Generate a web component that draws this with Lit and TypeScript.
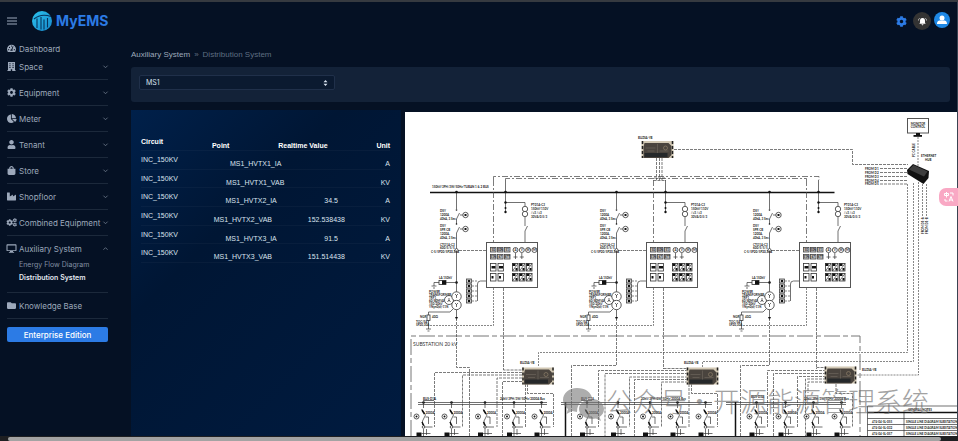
import { LitElement, html, svg, css } from "lit";
import { customElement, state } from "lit/decorators.js";

const COG =
  "M487.4 315.7l-42.6-24.6c4.3-23.2 4.3-47 0-70.2l42.6-24.6c4.9-2.8 7.1-8.6 5.5-14-11.1-35.6-30-67.8-54.7-94.6-3.8-4.1-10-5.1-14.8-2.3L380.8 110c-17.9-15.4-38.5-27.3-60.8-35.1V25.8c0-5.6-3.9-10.5-9.4-11.7-36.7-8.2-74.3-7.8-109.2 0-5.5 1.2-9.4 6.1-9.4 11.7V75c-22.2 7.9-42.8 19.8-60.8 35.1L88.7 85.5c-4.9-2.8-11-1.9-14.8 2.3-24.7 26.7-43.6 58.9-54.7 94.6-1.7 5.4.6 11.2 5.5 14L67.3 221c-4.3 23.2-4.3 47 0 70.2l-42.6 24.6c-4.9 2.8-7.1 8.6-5.5 14 11.1 35.6 30 67.8 54.7 94.6 3.8 4.1 10 5.1 14.8 2.3l42.6-24.6c17.9 15.4 38.5 27.3 60.8 35.1v49.2c0 5.6 3.9 10.5 9.4 11.7 36.7 8.2 74.3 7.8 109.2 0 5.5-1.2 9.4-6.1 9.4-11.7v-49.2c22.2-7.9 42.8-19.8 60.8-35.1l42.6 24.6c4.9 2.8 11 1.9 14.8-2.3 24.7-26.7 43.6-58.9 54.7-94.6 1.5-5.5-.7-11.3-5.6-14.1zM256 336c-44.1 0-80-35.9-80-80s35.9-80 80-80 80 35.9 80 80-35.9 80-80 80z";

const ICONS: Record<string, unknown> = {
  gauge: svg`<path fill-rule="evenodd" d="M256 40C115 40 0 150 0 290c0 53 14 102 40 145 6 9 15 13 26 13h380c11 0 20-4 26-13 26-43 40-92 40-145C512 150 397 40 256 40zM256 84a32 32 0 1 1 0 64 32 32 0 0 1 0-64zM96 352a32 32 0 1 1 0-64 32 32 0 0 1 0 64zm48-128a32 32 0 1 1 0-64 32 32 0 0 1 0 64zm222-76-62 165c17 14 24 35 16 71H192c-10-50 16-88 64-90l66-160c8-16 50-8 44 14zm50 204a32 32 0 1 1 0-64 32 32 0 0 1 0 64z"/>`,
  building: svg`<path fill-rule="evenodd" d="M56 0h400v464h40v48H296v-96h-80v96H16v-48h40zM136 72v56h64V72zM312 72v56h64V72zM136 180v56h64v-56zM312 180v56h64v-56zM136 288v56h64v-56zM312 288v56h64v-56z"/>`,
  cog: svg`<path d=${COG} />`,
  pie: svg`<path d="M527.8 288H290.5l158 158c6 6 16 6.500 22.200.7 38.700-36.500 65.300-85.600 73.100-140.900 1.300-9.400-6.500-17.800-16-17.800zM512 223.200C503.700 103.700 408.300 8.300 288.800 0 279.700-.6 272 7.100 272 16.200V240h223.800c9.100 0 16.800-7.700 16.200-16.800zM224 288V50.700c0-9.500-8.400-17.400-17.800-16C87 51.500-4.100 155.600.1 280.400 4.500 408.500 114.800 513.600 243 512c50.400-.6 97-16.900 135.300-44 7.900-5.600 8.400-17.200 1.600-24.100z"/>`,
  user: svg`<path transform="translate(32 0)" d="M224 256c70.7 0 128-57.3 128-128S294.700 0 224 0 96 57.300 96 128s57.300 128 128 128zm89.600 32h-16.700c-22.200 10.200-46.900 16-72.900 16s-50.600-5.800-72.900-16h-16.700C60.200 288 0 348.200 0 422.400V464c0 26.500 21.500 48 48 48h352c26.500 0 48-21.500 48-48v-41.600c0-74.200-60.200-134.400-134.400-134.400z"/>`,
  bag: svg`<path transform="translate(32 0)" fill-rule="evenodd" d="M352 160v-32C352 57.400 294.600 0 224 0S96 57.400 96 128v32H0v272c0 44.200 35.800 80 80 80h288c44.200 0 80-35.800 80-80V160zm-192-32c0-35.300 28.700-64 64-64s64 28.700 64 64v32H160z"/>`,
  factory: svg`<path d="M475.100 163.800L336 252.300V184c0-18.900-20.900-30.400-36.900-20.200L160 252.300V56c0-13.300-10.700-24-24-24H24C10.700 32 0 42.700 0 56v400c0 13.300 10.700 24 24 24h464c13.300 0 24-10.700 24-24V184c0-18.900-20.900-30.400-36.900-20.200z"/>`,
  cogs: svg`<g><path transform="translate(-40 60) scale(.76)" d=${COG}/><path transform="translate(330 10) scale(.46)" d=${COG}/><path transform="translate(330 260) scale(.46)" d=${COG}/></g>`,
  desktop: svg`<path fill-rule="evenodd" d="M30 20h452c36 0 60 24 60 60v270c0 30-24 54-60 54H340l14 50h50v48H108v-48h50l14-50H30c-36 0-60-24-60-54V80c0-36 24-60 60-60zM30 80v270h452V80z"/>`,
  folder: svg`<path d="M464 128H272l-64-64H48C21.500 64 0 85.500 0 112v288c0 26.500 21.500 48 48 48h416c26.500 0 48-21.500 48-48V176c0-26.500-21.500-48-48-48z"/>`,
};

const NAV: [string, string][] = [
  ["building", "Space"],
  ["cog", "Equipment"],
  ["pie", "Meter"],
  ["user", "Tenant"],
  ["bag", "Store"],
  ["factory", "Shopfloor"],
  ["cogs", "Combined Equipment"],
];

const POINTS = [
  { circuit: "INC_150KV", point: "MS1_HVTX1_IA", value: "", unit: "A" },
  { circuit: "INC_150KV", point: "MS1_HVTX1_VAB", value: "", unit: "KV" },
  { circuit: "INC_150KV", point: "MS1_HVTX2_IA", value: "34.5", unit: "A" },
  { circuit: "INC_150KV", point: "MS1_HVTX2_VAB", value: "152.538438", unit: "KV" },
  { circuit: "INC_150KV", point: "MS1_HVTX3_IA", value: "91.5", unit: "A" },
  { circuit: "INC_150KV", point: "MS1_HVTX3_VAB", value: "151.514438", unit: "KV" },
];

@customElement("line-diagram")
export class LineDiagram extends LitElement {
  static styles = css`
    :host { display: block; background: #fff; }
    svg { display: block; width: 100%; height: auto; }
    .wire { fill: none; stroke: #333; stroke-width: 0.7; }
    .dash { fill: none; stroke: #444; stroke-width: 0.7; stroke-dasharray: 3 1; }
    .fine { fill: none; stroke: #555; stroke-width: 0.7; stroke-dasharray: 2 1; }
    .chain { fill: none; stroke: #444; stroke-width: 0.7; stroke-dasharray: 6 2 2 2; }
    .edge { fill: none; stroke: #777; stroke-width: 1; stroke-dasharray: 16 3 5 3; }
    .bus { fill: none; stroke: #111; stroke-width: 1.5; }
    .ring { fill: #fff; stroke: #333; stroke-width: 0.8; }
    .tag { fill: #ccc; stroke: #444; stroke-width: 0.8; }
    .panel { fill: #fff; stroke: #555; stroke-width: 1; }
    .ink { fill: #111; }
    text { font-family: Lato, "Liberation Sans", sans-serif; fill: #222; }
    .t3 { font-size: 3px; font-weight: 700; }
    .t5 { font-size: 5px; fill: #333; }
    .mark { opacity: 0.6; }
    .mark text { font-family: "Noto Sans CJK SC", sans-serif; font-size: 27px; font-weight: 300; fill: #666; }
    .mark path { fill: #777; }
  `;

  private lines(x: number, y: number, rows: string[], step = 3) {
    return rows.map((r, i) => svg`<text class="t3" x=${x} y=${y + i * step}>${r}</text>`);
  }

  private device(x: number, y: number, label: string, lx: number, ly: number) {
    return svg`
      <g transform="translate(${x} ${y})">
        <rect width="32" height="17" fill="#d2c8b4" />
        <path d="M1 0V17M31 0V17" stroke="#222" stroke-width="1.500" stroke-dasharray="3 2" />
        <path d="M3 2H27L30 5V14L27 17H2V6Z" fill="#4a443e" />
        <path d="M3 12H26V16H3Z" fill="#25282a" />
        <path d="M16 3V12M4 7H14M18 10H27M6 10H13" stroke="#6b645c" stroke-width=".7" />
        <circle cx="24" cy="7" r="2" fill="none" stroke="#8b7d69" stroke-width=".7" />
      </g>
      <text class="t3" x=${lx} y=${ly}>${label}</text>`;
  }

  private breaker(y: number) {
    return svg`
      <path class="wire" d="M456.500 ${y + 6}L459.500 ${y}M460 ${y + 2}h3" />
      <circle class="ring" cx="465.500" cy=${y + 2} r="2.700" />
      <rect class="ink" x="464.500" y=${y + 1} width="2" height="2" />`;
  }

  private bay(dx: number) {
    return svg`
      <g transform="translate(${dx} 0)">
        <path class="wire" d="M456.500 192V209M456.500 219V224M456.500 233V318" />
        <circle class="ink" cx="456.500" cy="192" r="1.300" />
        <circle class="ink" cx="456.500" cy="282.500" r="1.300" />
        <circle class="ink" cx="456.500" cy="210" r=".8" /><circle class="ink" cx="456.500" cy="224" r=".8" />
        ${this.breaker(213)} ${this.breaker(227)}
        ${this.lines(440, 212, ["DSY", "1200A", "40kA, 3 Sec."], 4)}
        ${this.lines(440, 227, ["DSY", "SPR CB", "1200A,", "40kA, 3 Sec."], 4)}
        ${this.lines(440, 246, ["CTO1A-C3", "600/5/5/5"], 3)}
        <text class="t3" x="431" y="253">C-5/5P20/5P20,30A</text>
        <path class="ring" d="M456.500 248l2.500 3h-5z" />
        <path class="dash" d="M459 250.500H486" />
        <path class="wire" d="M456.500 282.500H434V286M431.500 286h5M433 288h2" />
        <rect class="ring" x="439" y="280.500" width="7" height="4" /><rect class="ink" x="442" y="280.500" width="4" height="4" />
        <text class="t3" x="439" y="279">LA 150kV</text>
        ${this.lines(429, 293, ["POWER", "TRANSFORMER", "TRF1", "60/80MVA", "150/20kV", "YNyn0(d)-11%"])}
        <circle class="ring" cx="449" cy="300" r="4.500" />
        <circle class="ring" cx="456.500" cy="296.500" r="4.700" /><circle class="ring" cx="456.500" cy="305" r="4.700" />
        <path class="wire" d="M449 298v3M447.500 302l1.500-2 1.500 2M456.500 295v3M455 294l1.500 1.500 1.500-1.500M456.500 304v3M455 303l1.500 1.500 1.500-1.500" />
        <path class="wire" d="M453 309L450 312H428.500V315M428.500 320V329M426 329h5M427.500 331h2" />
        <rect class="ring" x="427" y="315" width="3" height="5.500" />
        <text class="t3" x="420" y="318">NGR</text><text class="t3" x="432" y="318">40Ω</text>
        ${this.lines(416, 323, ["TOC/5A", "5P20,30A"], 3)}
        <path class="ink" d="M455 317h3l-1.500 3z" />
        <path class="fine" d="M430 325.500H493.500V288" />
        <path class="chain" d="M493.500 180V242" />
        <path class="dash" d="M503.500 288V369" />
        <path class="wire" d="M505.500 180V212M505.500 202.500H525V206M525 217V226M525 231l2.500-5M525 231V242" />
        <circle class="ink" cx="505.500" cy="192" r="1.300" /><circle class="ink" cx="505.500" cy="202.500" r="1.200" />
        <circle class="ink" cx="505.500" cy="208" r="1" /><circle class="ink" cx="505.500" cy="212" r="1.200" />
        <circle class="ring" cx="525" cy="209" r="2.700" /><circle class="ring" cx="525" cy="214" r="2.700" />
        ${this.lines(531, 206, ["PT01A-C3", "150kV/110V", "/√3  /√3", "30VA/0.5/3"], 4)}
        <rect class="panel" x="486.500" y="242.500" width="51" height="45" />
        ${["50", "50N", "51", "51N", "67", "87T"].map(
          (t, i) => svg`
            <rect class="tag" x=${490.5 + (i % 3) * 7} y=${247.5 + Math.floor(i / 3) * 7} width="5.500" height="4.500" />
            <text class="t3" text-anchor="middle" x=${493.3 + (i % 3) * 7} y=${251 + Math.floor(i / 3) * 7}>${t}</text>`,
        )}
        ${[0, 1, 2, 3].map(
          (i) => svg`<circle class="ring" cx=${515.5 + i * 6.3} cy="250" r="2.500" />
            <text class="t3" text-anchor="middle" x=${515.5 + i * 6.3} y="251">${"AVWM"[i]}</text>`,
        )}
        <path class="wire" d="M515.500 253v6M513.500 257h4M521.800 253v6M519.800 257h4" />
        ${[0, 1, 2, 3].map(
          (i) => svg`<rect class="ring" x=${490.5 + (i % 2) * 7.5} y=${263.5 + Math.floor(i / 2) * 10} width="5.500" height="7.500" />
            <rect class="ink" x=${491.5 + (i % 2) * 7.5} y=${266 + Math.floor(i / 2) * 10} width=${i < 2 ? 4 : 2} height="2.500" />`,
        )}
        ${[0, 1, 2, 3, 4, 5].map((i) => {
          const x = 512.5 + (i % 3) * 7;
          const y = 263.5 + Math.floor(i / 3) * 10;
          return svg`<rect class="ring" x=${x} y=${y} width="5.500" height="7.500" />
            <path class="wire" d="M${x} ${y + 7.5}L${x + 5.5} ${y}" />
            <rect class="ink" x=${x} y=${y} width="3" height="2.500" /><rect class="ink" x=${x + 3} y=${y + 4.5} width="2" height="2.500" />`;
        })}
        ${[0, 1, 2, 3, 4].map(
          (i) => svg`<rect class="tag" x="466.500" y=${279 + i * 5} width="5" height="4" />
            <rect class="ink" x="468" y=${280 + i * 5} width="2" height="2" />
            <path class="fine" d="M472 ${281 + i * 5}H477" />`,
        )}
        <path class="wire" d="M477.500 301V284q0-3 3-3H486" />
      </g>`;
  }

  private feeder(x: number) {
    return svg`
      <g transform="translate(${x} 0)">
        <circle class="ink" cy="402.500" r="1.300" />
        <path class="wire" d="M0 402V408M-2 409L2 415L-1 421V425M0 429V436M2 417h3V424M0 427H9" />
        <path class="bus" d="M-1.500 410L1 414M-1.500 422l2 4" />
        <circle class="ring" cx="-7" cy="416.500" r="2.500" /><circle class="ink" cx="-7" cy="416.500" r="1" />
        <circle class="ring" cy="427" r="1.300" />
        <text class="t3" x="2" y="413.500">2000A</text>
        <rect class="ink" x="-7" y="432.500" width="5" height="3.500" />
        <path class="wire" d="M-2 433.500H7M3 429v6" />
      </g>`;
  }

  render() {
    return html`
      <svg viewBox="405 112 552 324" role="img" aria-label="Single line diagram of the distribution system">
        <path class="bus" d="M430 192.500H834.500" />
        <text class="t3" x="432" y="188">150kV/3PH/3W/50Hz/TUBAN 1 &amp; 2 BUS</text>
        <path class="chain" d="M493.500 180V176.500H819V180M505.500 180V178.500H806.500V180" />
        <path class="dash" d="M653.500 180.500H666M656.500 158V180M659.500 158V180M662 158V180M654 178h12" />
        ${[0, 160, 313].map((dx) => this.bay(dx))}

        <path class="dash" d="M674 149.500H852.500V164.500H908" />
        <rect class="panel" x="907.500" y="118.500" width="21" height="14.500" />
        <rect class="ink" x="916" y="133" width="4" height="3" /><rect class="ink" x="913.500" y="135" width="8.500" height="1.800" />
        <text class="t3" text-anchor="middle" x="918" y="125">MONITOR</text><text class="t3" text-anchor="middle" x="918" y="128">CONTROL</text>
        <path class="fine" d="M918 137V166" />
        <text class="t3" transform="translate(915 157) rotate(-90)">PC CABLE</text>
        <text class="t3" x="921" y="156.500">ETHERNET</text><text class="t3" x="925" y="161">HUB</text>
        ${[168.5, 172.5, 176.5, 180.5, 184].map(
          (y, i) => svg`<text class="t3" x="865" y=${y + 1}>FROM D${i + 1}</text><path class="dash" d="M880 ${y}H907" />`,
        )}
        <path class="fine" d="M907.500 184V352.500H538.500V367M913.500 183V361.500H702.500V367M918.500 182V375H857M922.500 184V216M926.500 184V216" />
        <path fill="#111" d="M907 170l6-6 16 7-.5 7-5 6-16-10z" />
        <path fill="#3d3d3d" d="M909 169.500l4.500-4.500 14 6.500-3.500 5z" />
        <text class="t3" transform="translate(923.500 234) rotate(-90)">FROM D1-A</text>
        <text class="t3" transform="translate(928 234) rotate(-90)">FROM D1-B</text>

        <path class="edge" d="M411 436V336H860V436" />
        <text class="t5" x="413" y="346">SUBSTATION 20 kV</text>

        <path class="dash" d="M456.500 318V367.500H469.500V436M616.500 318V365.500H571.500V436M769.500 318V365.500H740.500V436" />
        <path class="dash" d="M503.500 369V370H522M663.500 368.500H688M816.500 367.500H826" />
        <path class="dash" d="M522 372.500H434.500V427M522 375H462.500V427M522 378H497V427M522 381.500H502.500V436M525.500 384V427M527.500 384V393.500H553.500V427" />
        <path class="dash" d="M688 370.500H598.500V427M688 373.500H605V436M688 377H629.500V427M688 379.500H634.500V436M688 382H661.500V427M689 384V427M691.500 384V393.500H717.500V427" />
        <path class="dash" d="M826 370.500H767.500V427M826 373.500H773.500V436M826 376.500H797.500V427M826 379H805.500V436M826 382H808V393M836 384V393.500H852.500V427" />
        <path class="wire" d="M418 402.500H547M418 404.500H547M561 402.500H712M561 404.500H712M726 402.500H846M726 404.500H846" />
        <path class="bus" d="M565.500 402V436M735.500 402V436" />
        ${[423.5, 451.5, 485, 514, 541.5, 587, 618, 650, 677.5, 705.5, 756.5, 785.5, 813.5, 841.5].map((x) => this.feeder(x))}
        <text class="t3" x="423" y="400">BUS-D1A</text><path class="wire" d="M423 400.500h11" />
        <text class="t3" x="581" y="400">BUS-D2A</text><path class="wire" d="M581 400.500h11" />
        <text class="t3" x="751" y="398">BUS-D3A</text>
        <text class="t3" x="500" y="400">20kV/3PH/3W/50Hz/2000A Bus</text>
        <text class="t3" x="641" y="400">20kV/3PH/3W/50Hz/2000A Bus</text>
        <text class="t3" x="804" y="399.500">20kV/3PH/3W/50Hz/2000A Bus</text>

        ${this.device(641.5, 141, "BUZSA-YB", 638, 139)}
        ${this.device(522, 367.5, "BUZSA-YB", 520, 364)}
        ${this.device(686.5, 367.5, "BUZSA-YB", 684, 364)}
        ${this.device(824.5, 366.5, "BUZSA-YB", 862, 371)}

        <path class="wire" d="M867.500 436V406H957M867.500 418.500H957M867.500 424.500H957M867.500 430.500H957M904 412V436" />
        <path class="bus" d="M867.500 412.500H957" />
        <text class="t3" x="908" y="411">GENERAL NOTES</text>
        ${["055", "032", "057"].map(
          (n, i) => svg`<text class="t3" x="872" y=${422.5 + i * 6}>474-04-SL-${n}</text>
            <text class="t3" x="906" y=${422.5 + i * 6}>SINGLE LINE DIAGRAM SUBSTATION</text>`,
        )}

        <g class="mark">
          <path d="M577 388c-8 0-14 5-14 12 0 4 2 7 5 9l-1.500 5 5.500-3 5 1c0-9 6-14 15-14-1-6-7-10-15-10z" />
          <path d="M592 399c-7 0-13 4.500-13 10s6 10 13 10l4-.5 5 2.500-1.500-4c3-2 4.500-5 4.500-8 0-5.500-5-10-12-10z" />
          <text x="606" y="412">公众号</text>
          <text x="686" y="412">·</text>
          <text x="713" y="412">开源能源管理系统</text>
        </g>
      </svg>
    `;
  }
}

@customElement("app-root")
export class AppRoot extends LitElement {
  @state() private auxOpen = true;

  static styles = css`
    :host {
      display: flex;
      flex-direction: column;
      min-height: 100vh;
      box-sizing: border-box;
      border-top: 2px solid #363a40;
      background: #051124;
      color: #9da9bb;
      font: 8px/12px Inter, sans-serif;
      overflow: hidden;
    }
    * { box-sizing: border-box; }
    button { font: inherit; color: inherit; background: none; border: 0; padding: 0; cursor: pointer; }
    a { color: inherit; text-decoration: none; }
    svg { display: block; overflow: visible; }
    .page { flex: 1; display: flex; flex-direction: column; border-right: 1px solid #3a4352; }
    .header { display: flex; align-items: center; height: 38px; padding: 0 7px; }
    .brand { display: flex; align-items: center; gap: 4px; margin-left: 15px; color: #2c7be5; font-size: 14px; line-height: 20px; font-weight: 700; }
    .tools { display: flex; align-items: center; gap: 3px; margin-left: auto; }
    .round { width: 18px; height: 18px; border-radius: 50%; display: grid; place-items: center; }
    .gear { color: #2c7be5; }
    .bell { background: #333; color: #fff; }
    .avatar { background: #1e88e5; color: #fff; width: 16px; height: 16px; margin-bottom: 2px; }
    .columns { flex: 1; display: flex; }
    .side { width: 131px; flex: none; padding: 0 23px 0 7px; }
    .item { display: flex; align-items: center; width: 100%; height: 17px; gap: 3px; font-weight: 400; text-align: left; white-space: nowrap; }
    .item .label { flex: 1; }
    .glyph { width: 9px; height: 9px; fill: currentColor; flex: none; }
    .chev { width: 5px; height: 5px; fill: none; stroke: #6d798b; stroke-width: 1; flex: none; }
    .group { border-bottom: 1px solid #1c293b; padding-bottom: 4px; margin-bottom: 4px; }
    .group.first { padding-top: 1px; }
    .sub { display: flex; flex-direction: column; margin: 0; padding: 1px 0 4px 12px; list-style: none; font-size: 7px; line-height: 13px; color: #8390a3; }
    .sub .on { color: #e3e9f1; font-weight: 600; }
    .promo { display: block; width: 100%; height: 15px; margin-top: 8px; border-radius: 2px; background: #2c7be5; color: #fff; font-weight: 500; }
    .main { flex: 1; min-width: 0; display: flex; flex-direction: column; }
    .crumbs { display: flex; gap: 4px; margin-top: 9px; font: 8px/12px "Liberation Sans", Arial, sans-serif; color: #5f6e82; }
    .crumbs a { color: #9da9bb; }
    .filter { margin: 6px 7px 8px 0; padding: 8px; height: 35px; border-radius: 3px; background: #132238; }
    .pick { position: relative; width: 24%; min-width: 196px; }
    .pick select { appearance: none; display: block; width: 100%; height: 15px; padding: 0 6px; border: 1px solid #20304a; border-radius: 2px; background: #0b1a30; color: #d8e2ef; font: 7px/12px Inter, sans-serif; }
    .pick svg { position: absolute; right: 7px; top: 5px; width: 5px; height: 6px; fill: #d8e2ef; }
    .work { flex: 1; display: flex; gap: 4px; }
    .data { width: 270px; flex: none; padding: 22px 11px 0 10px; background: linear-gradient(135deg, #00204a, #001634 35%, #001b40); }
    line-diagram { flex: 1; min-width: 0; margin-top: 2px; }
    table { display: block; font: 7px/9px "Liberation Sans", Arial, sans-serif; color: #dbe3ee; }
    thead { display: block; height: 19px; }
    tbody { display: grid; grid-template-rows: repeat(6, 1fr); height: 112px; }
    tr { display: flex; justify-content: space-between; height: 100%; border-bottom: 1px solid rgba(255, 255, 255, 0.03); }
    th, td { padding: 8px 0 0; line-height: 9px; }
    thead th { padding-top: 9px; }
    th { color: #fff; font-weight: 700; }
    td:first-child { padding-top: 4px; }
    thead th:first-child { padding-top: 5px; }
    .scroll { display: flex; align-items: center; height: 5px; background: #1e1f22; padding: 0 17px 0 8px; }
    .thumb { flex: 1; height: 4px; border-radius: 2px; background: #a3a3a3; }
    .lang { position: fixed; right: 0; top: 188px; width: 19px; height: 18px; border-radius: 7px 0 0 7px; background: #f9a8c4; color: #fff; display: grid; place-items: center; }
  `;

  private glyph(name: string) {
    return html`<svg class="glyph" viewBox="0 0 512 512" aria-hidden="true">${ICONS[name]}</svg>`;
  }

  private chevron(up = false) {
    return html`<svg class="chev" viewBox="0 0 6 6" aria-hidden="true"><path d=${up ? "M.5 4.500L3 2l2.500 2.500" : "M.5 2L3 4.500 5.500 2"} /></svg>`;
  }

  render() {
    return html`
      <div class="page">
        <header class="header">
          <button aria-label="Toggle menu">
            <svg width="10" height="8" viewBox="0 0 10 8" stroke="#9da9bb" stroke-width="1"><path d="M0 1h10M0 4h10M0 7h10" /></svg>
          </button>
          <a class="brand" href="#">
            <svg width="20" height="20" viewBox="0 0 20 20" aria-hidden="true">
              <defs><linearGradient id="sea" x1="0" y1="0" x2="1" y2="1"><stop offset="0" stop-color="#2cc4ee" /><stop offset="1" stop-color="#1787cb" /></linearGradient></defs>
              <circle cx="10" cy="10" r="10" fill="url(#sea)" />
              <path d="M2 8Q9 2 19 5.500M5 7.500V17M9 6V18.500M12 8.500V18.500M15.500 7V16.500" fill="none" stroke="#07335d" stroke-width="1.100" />
            </svg>
            MyEMS
          </a>
          <div class="tools">
            <button class="round gear" aria-label="Settings"><svg width="11" height="11" viewBox="0 0 512 512" fill="currentColor"><path d=${COG} /></svg></button>
            <button class="round bell" aria-label="Notifications">
              <svg width="9" height="9" viewBox="0 0 20 20" fill="currentColor"><path d="M10 2c-4 0-5.500 3-5.500 6v4L3 15h14l-1.500-3V8c0-3-1.500-6-5.500-6zM8 16h4c0 3-4 3-4 0zM3 2l1 1C2.500 4.500 2 6 2 8H.5C.5 5.500 1.500 3.500 3 2zm14 0l-1 1c1.500 1.500 2 3 2 5h1.500c0-2.500-1-4.500-2.500-6z" /></svg>
            </button>
            <button class="round avatar" aria-label="Account">
              <svg width="10" height="10" viewBox="0 0 10 10" fill="currentColor"><circle cx="5" cy="3" r="2.500" /><path d="M0 9c0-4 3-3.500 5-3.500S10 5 10 9z" /></svg>
            </button>
          </div>
        </header>
        <div class="columns">
          <nav class="side" aria-label="Main">
            <a class="item" href="#">${this.glyph("gauge")}<span class="label">Dashboard</span></a>
            ${NAV.map(
              ([icon, label], i) => html`
                <div class="group ${i === 0 ? "first" : ""}">
                  <button class="item">${this.glyph(icon)}<span class="label">${label}</span>${this.chevron()}</button>
                </div>`,
            )}
            <div class="group">
              <button class="item" aria-expanded=${this.auxOpen} @click=${() => (this.auxOpen = !this.auxOpen)}>
                ${this.glyph("desktop")}<span class="label">Auxiliary System</span>${this.chevron(this.auxOpen)}
              </button>
              ${this.auxOpen
                ? html`<ul class="sub">
                    <li><a href="#">Energy Flow Diagram</a></li>
                    <li><a class="on" href="#">Distribution System</a></li>
                  </ul>`
                : null}
            </div>
            <div class="group"><a class="item" href="#">${this.glyph("folder")}<span class="label">Knowledge Base</span></a></div>
            <button class="promo">Enterprise Edition</button>
          </nav>
          <main class="main">
            <nav class="crumbs" aria-label="Breadcrumb"><a href="#">Auxiliary System</a><span>»</span><span>Distribution System</span></nav>
            <section class="filter">
              <div class="pick">
                <select aria-label="Distribution system"><option>MS1</option></select>
                <svg viewBox="0 0 5 6" aria-hidden="true"><path d="M2.500 0L4.500 2.300H.5zM2.500 6L4.500 3.700H.5z" /></svg>
              </div>
            </section>
            <div class="work">
              <section class="data">
                <table>
                  <thead><tr><th>Circuit</th><th>Point</th><th>Realtime Value</th><th>Unit</th></tr></thead>
                  <tbody>
                    ${POINTS.map((p) => html`<tr><td>${p.circuit}</td><td>${p.point}</td><td>${p.value}</td><td>${p.unit}</td></tr>`)}
                  </tbody>
                </table>
              </section>
              <line-diagram></line-diagram>
            </div>
          </main>
        </div>
      </div>
      <div class="scroll" aria-hidden="true"><div class="thumb"></div></div>
      <button class="lang" aria-label="Translate">
        <svg width="10" height="10" viewBox="0 0 10 10" fill="none" stroke="currentColor" stroke-width="1"><path d="M.5 1.500h4v2h-4zM2.500 0v5.500M6 1h3v2.500M1 7v2h2.500M5 9.500L7 4.500l2 5M5.500 8h3" /></svg>
      </button>
    `;
  }
}
